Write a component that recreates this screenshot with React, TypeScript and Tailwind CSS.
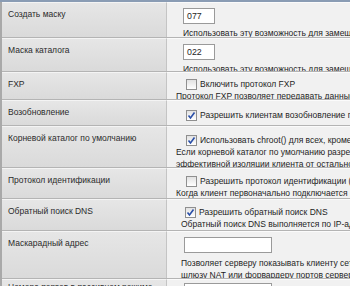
import React from "react";

const font = { fontFamily: '"Liberation Sans", Arial, sans-serif' };

function Check({ checked }: { checked?: boolean }) {
  return (
    <span className="inline-flex w-[11px] h-[11px] shrink-0 items-center justify-center border border-[#8f8f8f] bg-gradient-to-b from-[#e2e2e2] to-[#ffffff]">
      {checked && (
        <svg width="9" height="9" viewBox="0 0 9 9">
          <path d="M1.5 4.5 L3.5 7 L7.5 1.5" fill="none" stroke="#2a4fa8" strokeWidth="1.6" />
        </svg>
      )}
    </span>
  );
}

function Row({
  label,
  h,
  lpt = "pt-[5px]",
  children,
}: {
  label: string;
  h: string;
  lpt?: string;
  children: React.ReactNode;
}) {
  return (
    <div className={`flex border-b border-[#b4b4b4] ${h}`}>
      <div className={`w-[165px] shrink-0 bg-gradient-to-b from-[#e6e6e6] to-[#dadada] border-t border-[#f4f4f4] border-r border-r-[#c4c4c4] pl-[6px] text-[#2b2b2b] ${lpt}`}>
        {label}
      </div>
      <div className="flex-1 min-w-0 overflow-hidden bg-[#f1f1f1] border-t border-[#fbfbfb] pl-[9px] pt-[5px] whitespace-nowrap text-[#1e1e1e]">
        {children}
      </div>
    </div>
  );
}

export default function App() {
  return (
    <div className="w-[350px] h-[286px] overflow-hidden bg-[#f1f1f1] text-[8.5px] leading-[12px]" style={font}>
      <div className="h-[2px] bg-[#8a9cb4]" />
      <div className="border-l-2 border-[#a9a9a9]">
        <Row label="Создать маску" h="h-[36px]">
          <div className="ml-[7px] w-[32px] h-[16px] border border-[#9a9a9a] bg-white pl-[3px] leading-[14px] text-[8.8px]">077</div>
          <div className="mt-[3px] ml-[7px]">Использовать эту возможность для замещения</div>
        </Row>
        <Row label="Маска каталога" h="h-[34px]">
          <div className="ml-[7px] w-[32px] h-[16px] border border-[#9a9a9a] bg-white pl-[3px] leading-[14px] text-[8.8px]">022</div>
          <div className="mt-[3px] ml-[7px]">Использовать эту возможность для замещения</div>
        </Row>
        <Row label="FXP" h="h-[28px]">
          <div className="flex items-center gap-[3px] pl-[10px]">
            <Check />
            <span>Включить протокол FXP</span>
          </div>
          <div>Протокол FXP позволяет передавать данные между серверами</div>
        </Row>
        <Row label="Возобновление" h="h-[26px]">
          <div className="flex items-center gap-[3px] pl-[10px] pt-[3px]">
            <Check checked />
            <span>Разрешить клиентам возобновление прерванных загрузок</span>
          </div>
        </Row>
        <Row label="Корневой каталог по умолчанию" h="h-[42px]">
          <div className="flex items-center gap-[3px] pl-[10px] pt-[2px]">
            <Check checked />
            <span>Использовать chroot() для всех, кроме группы</span>
          </div>
          <div>Если корневой каталог по умолчанию разрешен, это обеспечит</div>
          <div>эффективной изоляции клиента от остальной системы</div>
        </Row>
        <Row label="Протокол идентификации" h="h-[31px]">
          <div className="flex items-center gap-[3px] pl-[10px] pt-[1px]">
            <Check />
            <span>Разрешить протокол идентификации (RFC 1413)</span>
          </div>
          <div>Когда клиент первоначально подключается к серверу</div>
        </Row>
        <Row label="Обратный поиск DNS" h="h-[32px]">
          <div className="flex items-center gap-[3px] pl-[9px] pt-[1px]">
            <Check checked />
            <span>Разрешить обратный поиск DNS</span>
          </div>
          <div className="ml-[5px]">Обратный поиск DNS выполняется по IP-адресу клиента</div>
        </Row>
        <Row label="Маскарадный адрес" h="h-[48px]">
          <div className="ml-[8px] w-[88px] h-[16px] border border-[#9a9a9a] bg-white" />
          <div className="mt-[4px] ml-[5px]">Позволяет серверу показывать клиенту сетевой адрес</div>
          <div className="ml-[5px]">шлюзу NAT или форвардеру портов сервера.</div>
        </Row>
        <Row label="Номера портов в пассивном режиме" h="h-[40px]" lpt="pt-[1px]">
          <div className="ml-[8px] -mt-[2px] w-[88px] h-[16px] border border-[#9a9a9a] bg-white" />
        </Row>
      </div>
    </div>
  );
}
